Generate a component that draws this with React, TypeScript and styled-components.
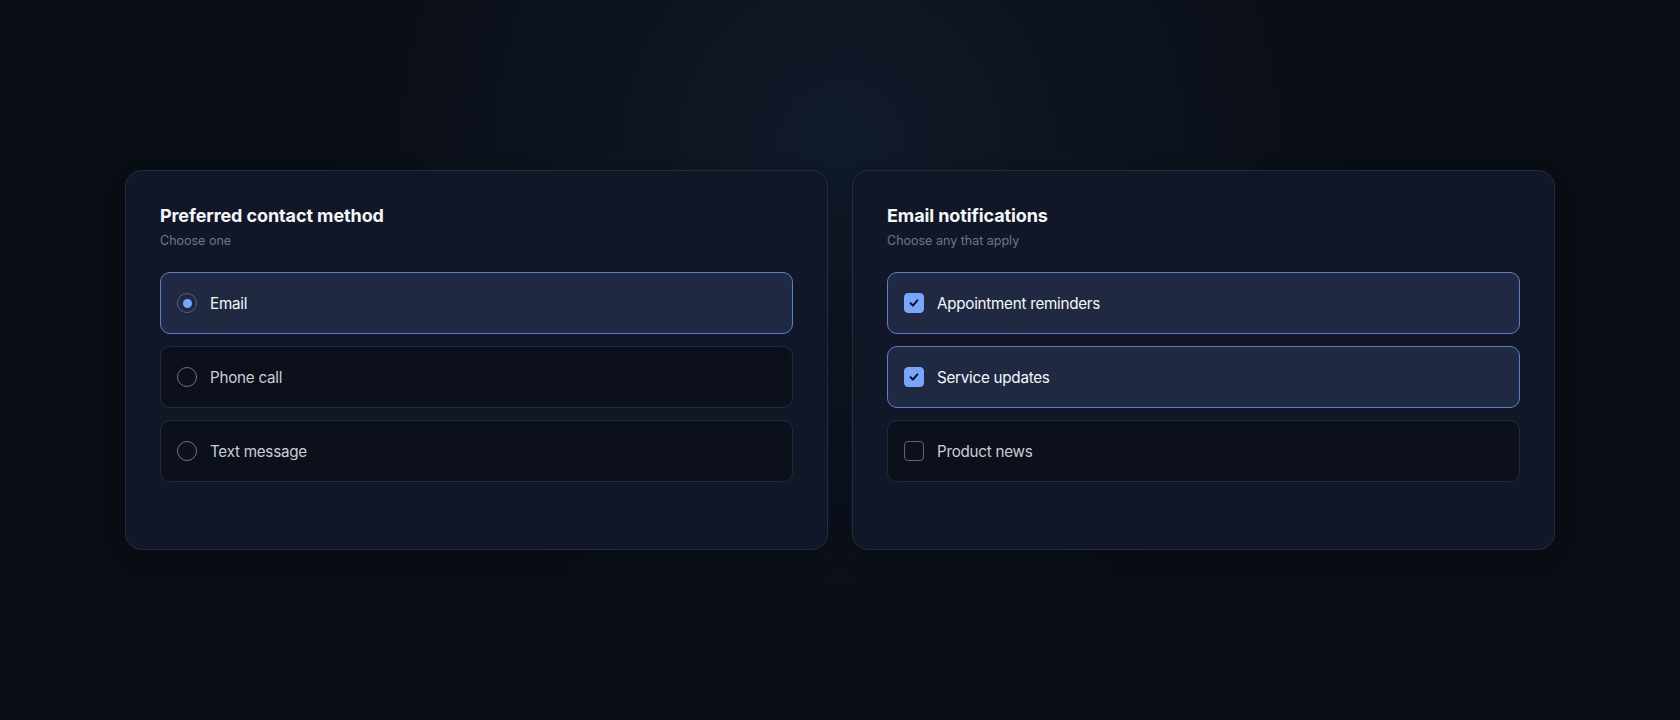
import styled, { createGlobalStyle } from 'styled-components';

const GlobalStyle = createGlobalStyle`
  html, body {
    margin: 0;
    padding: 0;
    background: #090d14;
  }
  body {
    font-family: Inter, "Noto Sans", "Liberation Sans", sans-serif;
    -webkit-font-smoothing: antialiased;
  }
`;

const Page = styled.div`
  min-height: 720px;
  box-sizing: border-box;
  padding: 170px 125px 0;
  background:
    radial-gradient(ellipse 520px 520px at 50% 20%, #111a2a 0%, rgba(17, 26, 42, 0.55) 45%, rgba(9, 13, 20, 0) 100%),
    #090d14;
`;

const Grid = styled.div`
  display: grid;
  grid-template-columns: 1fr 1fr;
  gap: 24px;
`;

const Card = styled.section`
  box-sizing: border-box;
  min-height: 380px;
  padding: 34px;
  background: #111727;
  border: 1px solid #232c3d;
  border-radius: 16px;
  box-shadow: 0 8px 24px rgba(0, 0, 0, 0.12);
`;

const Title = styled.h2`
  margin: 0;
  font-size: 18px;
  line-height: 22px;
  font-weight: 700;
  color: #f5f7fb;
  letter-spacing: -0.1px;
`;

const Subtitle = styled.p`
  margin: 5px 0 0;
  font-size: 12.5px;
  line-height: 18px;
  color: #6e7787;
`;

const List = styled.div`
  margin-top: 22px;
  display: flex;
  flex-direction: column;
  gap: 12px;
`;

const Option = styled.label<{ $on?: boolean }>`
  box-sizing: border-box;
  height: 62px;
  display: flex;
  align-items: center;
  gap: 13px;
  padding: 0 16px;
  border-radius: 10px;
  border: 1px solid ${p => (p.$on ? '#5a80cc' : '#222b3b')};
  background: ${p => (p.$on ? '#1f2a42' : '#0b101a')};
  cursor: pointer;
`;

const Radio = styled.span<{ $on?: boolean }>`
  box-sizing: border-box;
  width: 20px;
  height: 20px;
  border-radius: 50%;
  border: 1px solid ${p => (p.$on ? '#56637c' : '#6b7486')};
  display: flex;
  align-items: center;
  justify-content: center;
  flex-shrink: 0;

  &::after {
    content: '';
    width: 9px;
    height: 9px;
    border-radius: 50%;
    background: #78a6ff;
    display: ${p => (p.$on ? 'block' : 'none')};
  }
`;

const Box = styled.span<{ $on?: boolean }>`
  box-sizing: border-box;
  width: 20px;
  height: 20px;
  border-radius: 4px;
  border: 1px solid ${p => (p.$on ? '#78a6ff' : '#5b6476')};
  background: ${p => (p.$on ? '#78a6ff' : 'transparent')};
  display: flex;
  align-items: center;
  justify-content: center;
  flex-shrink: 0;
`;

const Label = styled.span<{ $on?: boolean }>`
  font-size: 15.2px;
  line-height: 20px;
  padding-top: 1px;
  letter-spacing: -0.25px;
  font-weight: 400;
  color: ${p => (p.$on ? '#f5f7fb' : '#c9ced8')};
`;

const Check = () => (
  <svg width="12" height="12" viewBox="0 0 12 12" fill="none">
    <path d="M2.6 6.3 L4.9 8.6 L9.4 3.4" stroke="#0b1120" strokeWidth="2" strokeLinecap="round" strokeLinejoin="round" />
  </svg>
);

const contact = [
  { label: 'Email', on: true },
  { label: 'Phone call', on: false },
  { label: 'Text message', on: false },
];

const notifications = [
  { label: 'Appointment reminders', on: true },
  { label: 'Service updates', on: true },
  { label: 'Product news', on: false },
];

export default function App() {
  return (
    <>
      <GlobalStyle />
      <Page>
        <Grid>
          <Card>
            <Title>Preferred contact method</Title>
            <Subtitle>Choose one</Subtitle>
            <List>
              {contact.map(c => (
                <Option key={c.label} $on={c.on}>
                  <Radio $on={c.on} />
                  <Label $on={c.on}>{c.label}</Label>
                </Option>
              ))}
            </List>
          </Card>
          <Card>
            <Title>Email notifications</Title>
            <Subtitle>Choose any that apply</Subtitle>
            <List>
              {notifications.map(n => (
                <Option key={n.label} $on={n.on}>
                  <Box $on={n.on}>{n.on && <Check />}</Box>
                  <Label $on={n.on}>{n.label}</Label>
                </Option>
              ))}
            </List>
          </Card>
        </Grid>
      </Page>
    </>
  );
}
